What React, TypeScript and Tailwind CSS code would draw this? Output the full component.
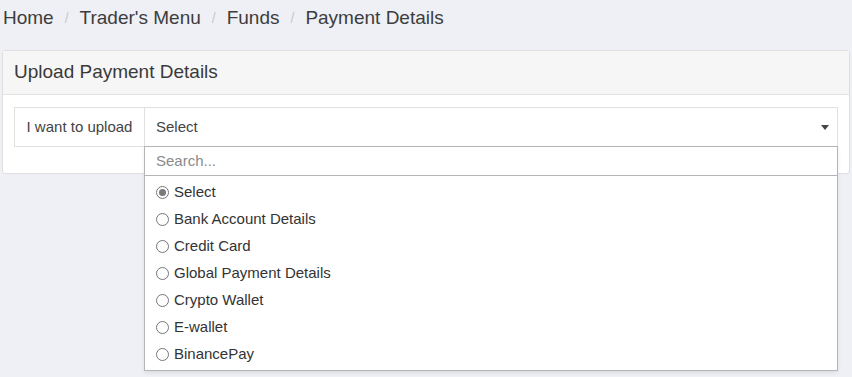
const crumbs = ["Home", "Trader's Menu", "Funds", "Payment Details"];

const options = [
  "Select",
  "Bank Account Details",
  "Credit Card",
  "Global Payment Details",
  "Crypto Wallet",
  "E-wallet",
  "BinancePay",
];

function Radio({ checked }: { checked?: boolean }) {
  return (
    <span className="flex h-[13px] w-[13px] shrink-0 items-center justify-center rounded-full border border-[#767676] bg-white">
      {checked ? <span className="h-[7px] w-[7px] rounded-full bg-[#7a7a7a]" /> : null}
    </span>
  );
}

export default function App() {
  return (
    <div className="min-h-[377px] bg-[#eef0f6] font-['Liberation_Sans',Arial,sans-serif] text-[#333]">
      <nav className="flex h-[37px] items-center pl-[3px] text-[19px] text-[#3d3d3d]">
        {crumbs.map((c, i) => (
          <span className="flex items-center" key={c}>
            {i > 0 ? <span className="mx-[11px] text-[14px] text-[#c8c8c8]">/</span> : null}
            {c}
          </span>
        ))}
      </nav>

      <section className="mx-[2px] mt-[13px] rounded-[3px] border border-[#dfdfdf] bg-white">
        <div className="flex h-[44px] items-center border-b border-[#e3e3e3] bg-[#f6f6f6] px-[11px] text-[19px] text-[#3a3a3a]">
          Upload Payment Details
        </div>
        <div className="px-[11px] pt-[12px] pb-[26px]">
          <div className="flex h-[40px] text-[15px]">
            <div className="flex w-[131px] items-center justify-center border border-[#e0e0e0] text-[#444]">
              I want to upload
            </div>
            <div className="relative flex flex-1 items-center border border-l-0 border-[#e0e0e0] pl-[11px] pr-[8px] text-[#444]">
              <span className="flex-1">Select</span>
              <span className="h-0 w-0 border-x-[4px] border-t-[5px] border-x-transparent border-t-[#444]" />

              <div className="absolute left-[-1px] right-[-1px] top-full z-10 h-[225px] border border-[#b5b5b5] bg-white shadow-[0_2px_4px_rgba(0,0,0,0.08)]">
                <div className="flex h-[29px] items-center border-b border-[#b5b5b5] pl-[11px] text-[#8a8a8a]">
                  Search...
                </div>
                <ul className="pt-[3px]">
                  {options.map((o, i) => (
                    <li className="flex h-[27px] items-center gap-[5px] pl-[11px] text-[#333]" key={o}>
                      <Radio checked={i === 0} />
                      {o}
                    </li>
                  ))}
                </ul>
              </div>
            </div>
          </div>
        </div>
      </section>
    </div>
  );
}
